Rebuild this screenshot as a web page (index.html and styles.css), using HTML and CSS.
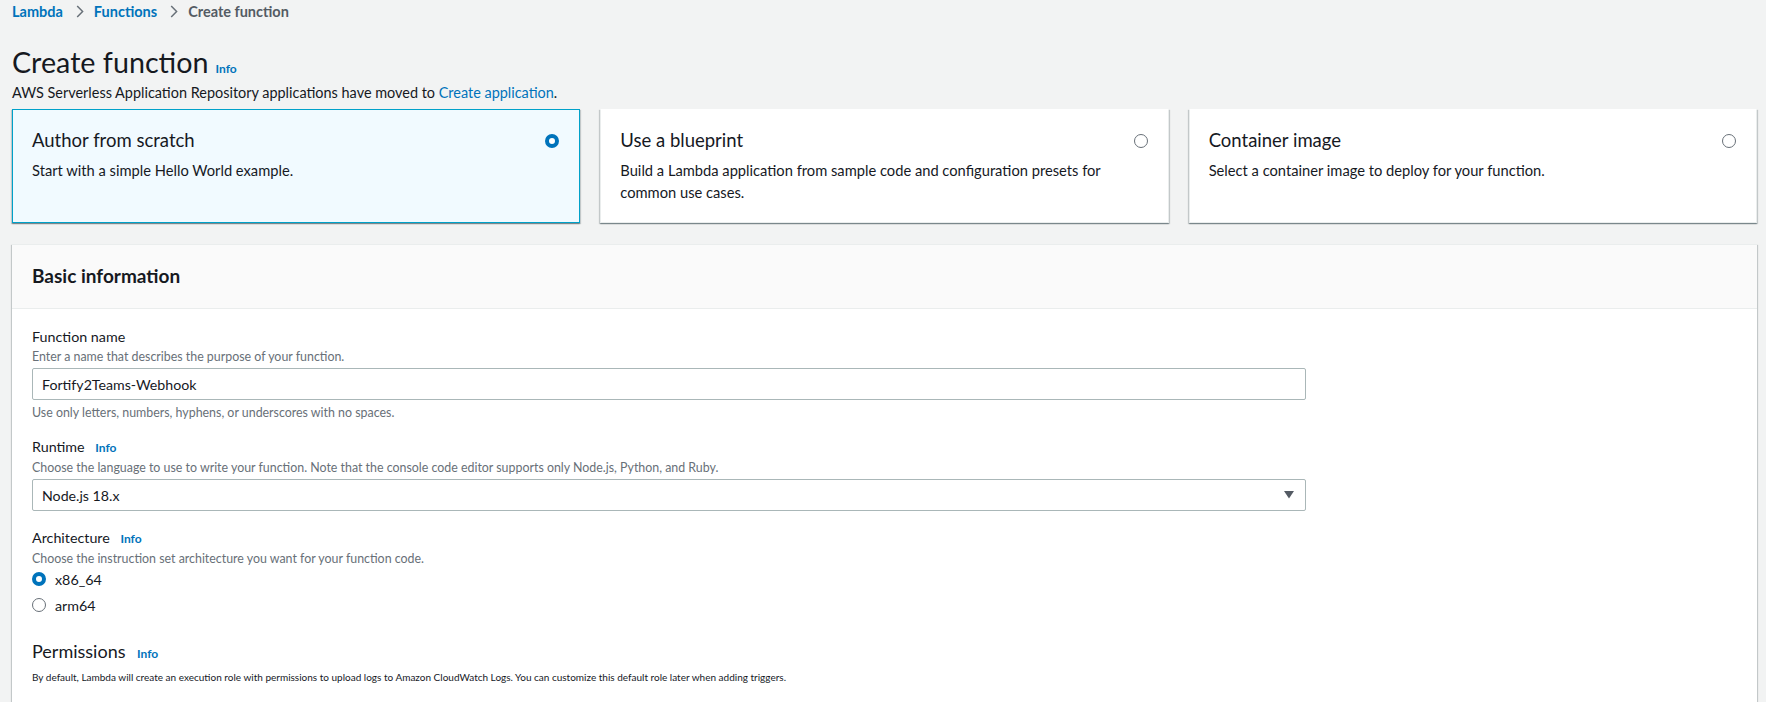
FILE: index.html
```html
<!DOCTYPE html>
<html lang="en">
<head>
<meta charset="utf-8">
<title>Create function</title>
<link rel="stylesheet" href="styles.css">
</head>
<body>
<div class="page">
  <nav class="crumbs">
    <a class="crumb-link" href="#">Lambda</a>
    <svg class="chev" width="8" height="13" viewBox="0 0 8 13"><path d="M1.2 1 L6.6 6.5 L1.2 12" fill="none" stroke="#687078" stroke-width="1.5"/></svg>
    <a class="crumb-link" href="#">Functions</a>
    <svg class="chev" width="8" height="13" viewBox="0 0 8 13"><path d="M1.2 1 L6.6 6.5 L1.2 12" fill="none" stroke="#687078" stroke-width="1.5"/></svg>
    <span class="crumb-current">Create function</span>
  </nav>

  <div class="title-row">
    <h1 class="title">Create function</h1>
    <a class="info info-title" href="#">Info</a>
  </div>
  <p class="subtitle">AWS Serverless Application Repository applications have moved to <a class="link" href="#">Create application</a>.</p>

  <div class="tiles">
    <div class="tile tile-selected">
      <div class="tile-head">
        <span class="tile-title">Author from scratch</span>
        <span class="radio radio-on"></span>
      </div>
      <p class="tile-desc">Start with a simple Hello World example.</p>
    </div>
    <div class="tile">
      <div class="tile-head">
        <span class="tile-title">Use a blueprint</span>
        <span class="radio"></span>
      </div>
      <p class="tile-desc">Build a Lambda application from sample code and configuration presets for common use cases.</p>
    </div>
    <div class="tile">
      <div class="tile-head">
        <span class="tile-title">Container image</span>
        <span class="radio"></span>
      </div>
      <p class="tile-desc">Select a container image to deploy for your function.</p>
    </div>
  </div>

  <section class="panel">
    <header class="panel-head">
      <h2 class="panel-title">Basic information</h2>
    </header>
    <div class="panel-body">
      <div class="field">
        <div class="label">Function name</div>
        <div class="desc">Enter a name that describes the purpose of your function.</div>
        <div class="input">Fortify2Teams-Webhook</div>
        <div class="hint">Use only letters, numbers, hyphens, or underscores with no spaces.</div>
      </div>

      <div class="field field-runtime">
        <div class="label">Runtime <a class="info" href="#">Info</a></div>
        <div class="desc">Choose the language to use to write your function. Note that the console code editor supports only Node.js, Python, and Ruby.</div>
        <div class="input select">
          <span>Node.js 18.x</span>
          <svg class="caret" width="10" height="8" viewBox="0 0 10 8"><path d="M0 0 H10 L5 7.5 Z" fill="#545b64"/></svg>
        </div>
      </div>

      <div class="field">
        <div class="label">Architecture <a class="info" href="#">Info</a></div>
        <div class="desc">Choose the instruction set architecture you want for your function code.</div>
        <div class="radio-row first"><span class="radio radio-on"></span><span class="radio-label">x86_64</span></div>
        <div class="radio-row"><span class="radio"></span><span class="radio-label">arm64</span></div>
      </div>

      <div class="section">
        <h3 class="section-title">Permissions <a class="info" href="#">Info</a></h3>
        <p class="small">By default, Lambda will create an execution role with permissions to upload logs to Amazon CloudWatch Logs. You can customize this default role later when adding triggers.</p>
      </div>
    </div>
  </section>
</div>
</body>
</html>
```

FILE: styles.css
```css
* { box-sizing: border-box; }

html, body {
  margin: 0;
  padding: 0;
  background: #f2f3f3;
  color: #16191f;
  font-family: "Lato", "Liberation Sans", Arial, sans-serif;
  overflow: hidden;
}

a { text-decoration: none; }

.page {
  padding: 0 9px 0 12px;
}

.crumbs {
  display: flex;
  align-items: center;
  height: 22px;
  font-size: 14.5px;
  font-weight: 700;
}

.crumb-link { color: #0073bb; }
.crumb-current { color: #545b64; }
.chev { margin: 0 10px 0 13px; }

.title-row {
  display: flex;
  align-items: baseline;
  margin-top: 22px;
  height: 36px;
}

.title {
  margin: 0;
  font-size: 28.7px;
  line-height: 36px;
  font-weight: 400;
}

.info {
  color: #0073bb;
  font-size: 12px;
  font-weight: 700;
  margin-left: 8px;
}

.info-title { margin-left: 7px; }

.subtitle {
  margin: 3px 0 0;
  font-size: 14.45px;
  line-height: 20px;
  color: #16191f;
}

.link { color: #0073bb; }

.tiles {
  display: grid;
  grid-template-columns: repeat(3, 1fr);
  gap: 20px;
  margin-top: 6px;
}

.tile {
  background: #fff;
  height: 114px;
  padding: 17px 19px 0 19px;
  border: 1px solid #eaeded;
  border-top-color: #fff;
  box-shadow: 0 1px 1px 0 rgba(0, 28, 36, 0.3), 1px 1px 1px 0 rgba(0, 28, 36, 0.15), -1px 1px 1px 0 rgba(0, 28, 36, 0.15);
}

.tile-selected {
  background: #f1faff;
  border: 1px solid #00a1c9;
}

.tile-head {
  display: flex;
  align-items: center;
  justify-content: space-between;
  height: 26px;
}

.tile-title {
  font-size: 18.5px;
  line-height: 26px;
}

.tile-desc {
  margin: 6px 0 0;
  font-size: 14.7px;
  line-height: 22px;
  padding-right: 40px;
}

.radio {
  display: inline-block;
  width: 14px;
  height: 14px;
  border-radius: 50%;
  border: 1px solid #687078;
  background: #fff;
  flex: none;
}

.radio-on {
  border: 4px solid #0073bb;
  background: #fff;
}

.tile .radio { margin-right: 1px; margin-top: 2px; }

.panel {
  margin-top: 21px;
  background: #fff;
  box-shadow: 0 1px 1px 0 rgba(0, 28, 36, 0.3), 1px 1px 1px 0 rgba(0, 28, 36, 0.15), -1px 1px 1px 0 rgba(0, 28, 36, 0.15);
  border-top: 1px solid #eaeded;
}

.panel-head {
  background: #fafafa;
  border-bottom: 1px solid #eaeded;
  padding: 19px 20px 20px;
}

.panel-title {
  margin: 0;
  font-size: 19px;
  line-height: 24px;
  font-weight: 700;
}

.panel-body {
  padding: 18px 20px 40px;
}

.field { margin-bottom: 16px; }
.field-runtime { margin-bottom: 17px; }

.label {
  font-size: 14.3px;
  line-height: 20px;
}

.label .info { margin-left: 7px; font-size: 12px; }

.desc, .hint {
  font-size: 12.4px;
  line-height: 17px;
  color: #687078;
}

.desc { margin-top: 1px; }

.hint { margin-top: 4px; }

.input {
  margin-top: 3px;
  width: 1274px;
  height: 32px;
  border: 1px solid #aab7b8;
  border-radius: 2px;
  padding: 0 9px;
  display: flex;
  align-items: center;
  font-size: 14.2px;
  background: #fff;
}

.select {
  justify-content: space-between;
}

.caret { margin-right: 2px; }

.radio-row {
  display: flex;
  align-items: center;
  height: 20px;
  margin-top: 6px;
}

.radio-row.first { margin-top: 2px; }

.radio-label {
  font-size: 14.3px;
  margin-left: 9px;
}

.section { margin-top: 24px; }

.section-title {
  margin: 0;
  font-size: 18px;
  line-height: 24px;
  font-weight: 400;
}

.section-title .info { margin-left: 7px; }

.small {
  margin: 4px 0 0;
  font-size: 10px;
  line-height: 14px;
}
```
